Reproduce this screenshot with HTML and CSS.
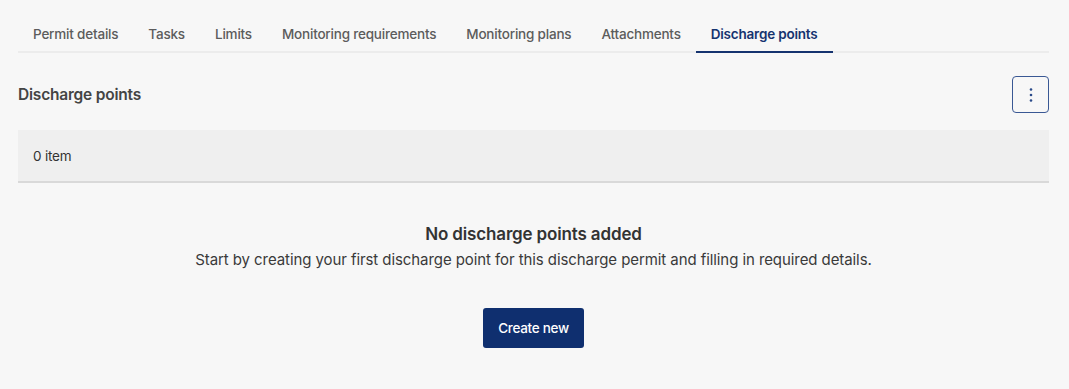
FILE: index.html
```html
<!DOCTYPE html>
<html lang="en">
<head>
    <meta charset="UTF-8">
    <meta name="viewport" content="width=device-width, initial-scale=1.0">
    <title>Discharge points</title>
    <link rel="stylesheet" href="styles.css">
</head>
<body>
    <div class="page">
        <nav class="tabs">
            <a class="tab">Permit details</a>
            <a class="tab">Tasks</a>
            <a class="tab">Limits</a>
            <a class="tab">Monitoring requirements</a>
            <a class="tab">Monitoring plans</a>
            <a class="tab">Attachments</a>
            <a class="tab active">Discharge points</a>
        </nav>

        <div class="section-header">
            <h2>Discharge points</h2>
            <button class="menu-button" aria-label="More actions">
                <svg width="4" height="16" viewBox="0 0 4 16">
                    <circle cx="2" cy="2.5" r="1.3" fill="#2a4a8a"/>
                    <circle cx="2" cy="8" r="1.3" fill="#2a4a8a"/>
                    <circle cx="2" cy="13.5" r="1.3" fill="#2a4a8a"/>
                </svg>
            </button>
        </div>

        <div class="table-bar">0 item</div>

        <div class="empty">
            <h3>No discharge points added</h3>
            <p>Start by creating your first discharge point for this discharge permit and filling in required details.</p>
            <button class="primary">Create new</button>
        </div>
    </div>
</body>
</html>
```

FILE: styles.css
```css
body {
    margin: 0;
    padding: 0;
    background-color: #f7f7f7;
    font-family: Inter, "Noto Sans", sans-serif;
    color: #333333;
}

.page {
    padding: 0 20px 0 18px;
}

.tabs {
    display: flex;
    padding-top: 16px;
    border-bottom: 2px solid #ececec;
}

.tab {
    padding: 10px 15px 9px;
    font-size: 13.5px;
    letter-spacing: -0.2px;
    font-weight: 500;
    color: #5c5c5c;
    cursor: pointer;
    border-bottom: 2px solid transparent;
    margin-bottom: -2px;
}

.tab.active {
    color: #15336f;
    border-bottom-color: #15336f;
    font-weight: 600;
}

.section-header {
    display: flex;
    justify-content: space-between;
    align-items: center;
    margin-top: 23px;
}

.section-header h2 {
    margin: 0;
    font-size: 15.5px;
    letter-spacing: -0.2px;
    font-weight: 600;
    color: #444444;
}

.menu-button {
    width: 37px;
    height: 37px;
    display: flex;
    align-items: center;
    justify-content: center;
    background: transparent;
    border: 1px solid #3a5894;
    border-radius: 4px;
    cursor: pointer;
    padding: 0;
}

.table-bar {
    margin-top: 17px;
    height: 51px;
    display: flex;
    align-items: center;
    padding-left: 15px;
    background: #efefef;
    border-bottom: 2px solid #d9d9d9;
    font-size: 13.5px;
    letter-spacing: -0.2px;
    color: #333333;
}

.empty {
    display: flex;
    flex-direction: column;
    align-items: center;
    text-align: center;
    padding-top: 41px;
}

.empty h3 {
    margin: 0;
    font-size: 17px;
    letter-spacing: -0.15px;
    font-weight: 600;
    color: #333333;
}

.empty p {
    margin: 6px 0 0;
    font-size: 15px;
    letter-spacing: -0.08px;
    color: #3a3a3a;
}

.primary {
    margin-top: 39px;
    height: 40px;
    padding: 0 15px;
    background: #0f2f6f;
    color: #ffffff;
    border: none;
    border-radius: 3px;
    font-family: inherit;
    font-size: 13.5px;
    letter-spacing: -0.3px;
    font-weight: 500;
    cursor: pointer;
}
```
